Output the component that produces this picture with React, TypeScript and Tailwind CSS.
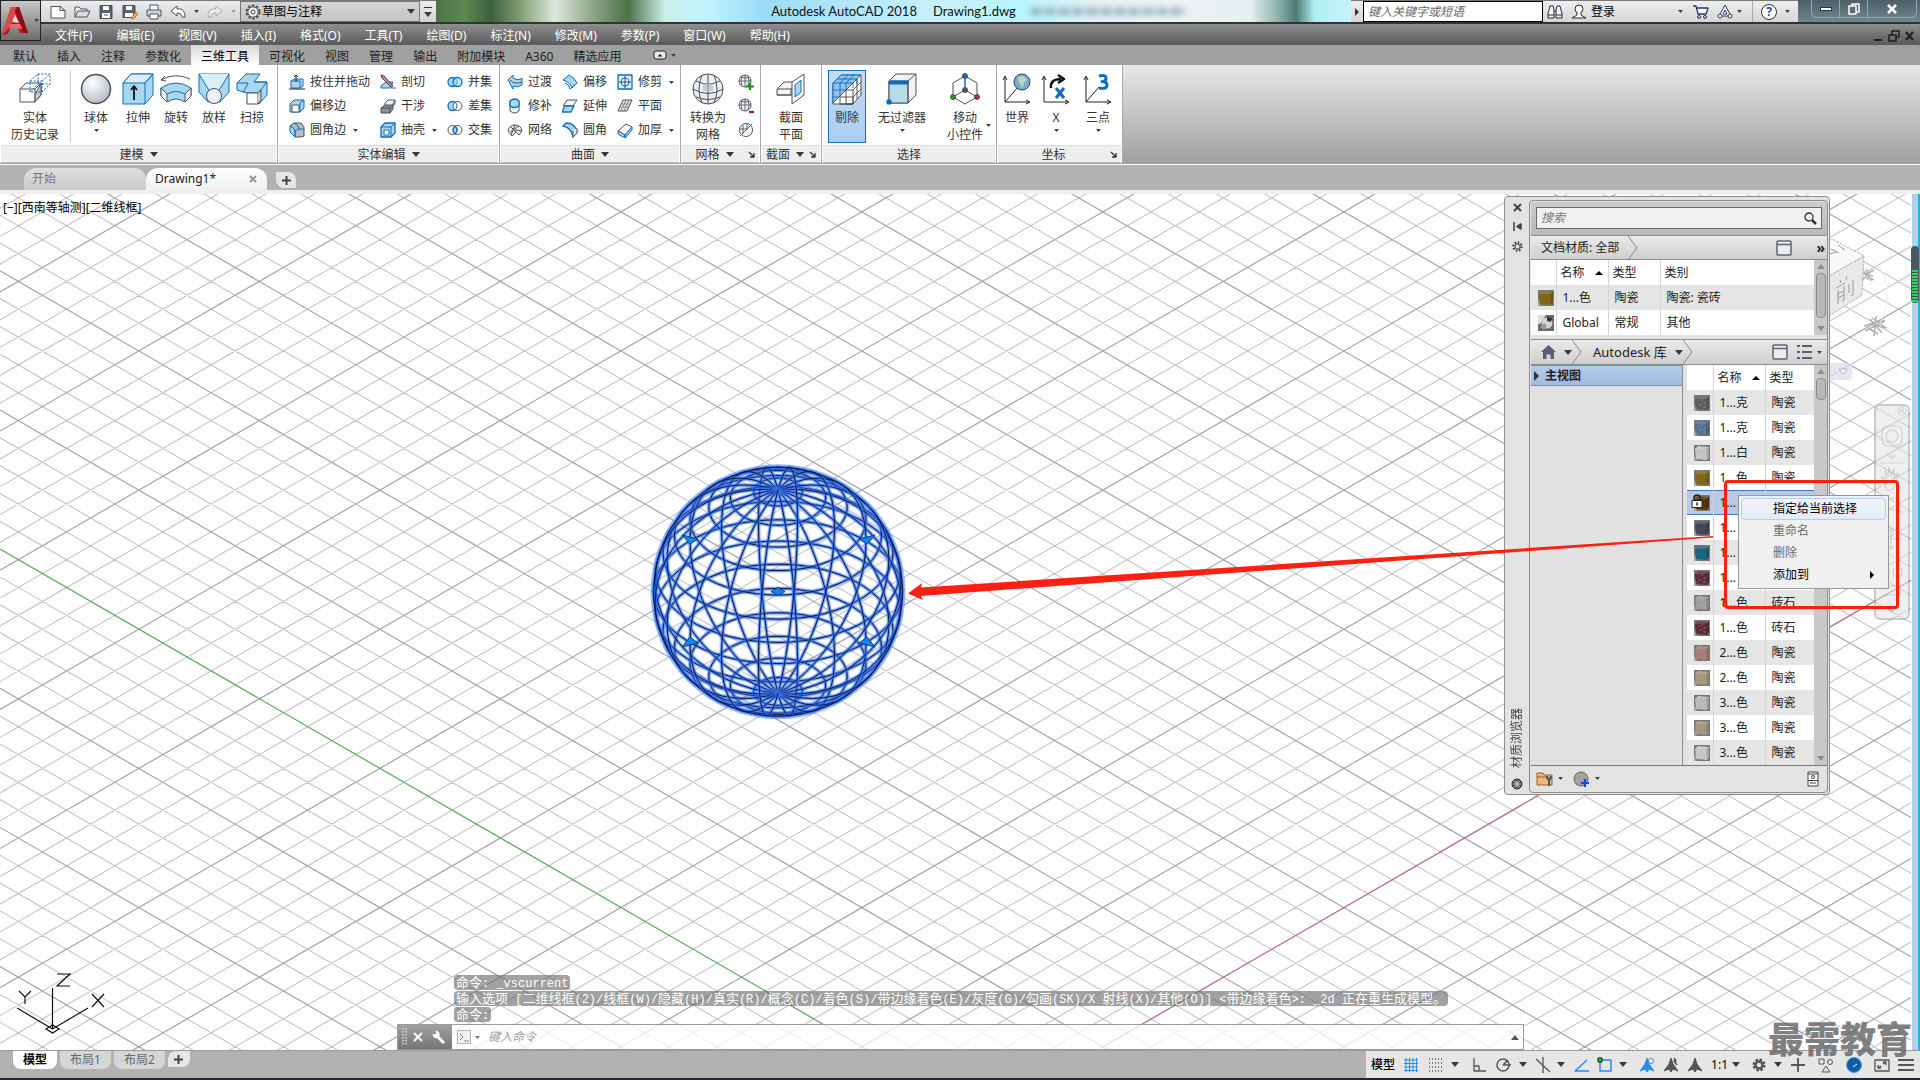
import type { ReactNode } from "react";
import clsx from "clsx";

const VIEW_ORIGIN = { x: 982.4, y: 922.3 };
const SLOPE = 0.57735;
const CELL = 27.83;

type IconProps = { size?: number; w?: number; h?: number; children: ReactNode };
const Icon = ({ size = 16, w = size, h = size, children }: IconProps) => (
  <svg
    width={w}
    height={h}
    viewBox={`0 0 ${w} ${h}`}
    fill="none"
    stroke="#4a525c"
    strokeLinejoin="round"
    className="shrink-0"
    aria-hidden="true"
  >
    {children}
  </svg>
);

const Caret = ({ small = false }: { small?: boolean }) => (
  <svg width={small ? 5 : 8} height={small ? 3 : 5} viewBox="0 0 8 5" className="shrink-0" aria-hidden="true">
    <path d="M0 0h8L4 5z" fill="#3a3a3a" />
  </svg>
);

/* ---------- title bar ---------- */

const AppLogo = () => (
  <svg width="32" height="30" viewBox="0 0 32 30" className="shrink-0" aria-hidden="true">
    <path d="M9 1h8l9 26h-8l-2-6-7-2-3 9-6 1z" fill="#b3191e" />
    <path d="M9 1l5 0-1 6-5 14-8 8z" fill="#e0474b" />
    <path d="M13 8l4 9-7-1z" fill="#d9d9d9" />
    <path d="M8 18l10 0 3 5-14-2z" fill="#ee6a6c" />
    <path d="M17 1l9 26h-4L13 4z" fill="#8e0f14" />
  </svg>
);

const QuickAccess = () => (
  <div className="flex h-full items-center gap-2 pl-[9px] pr-1">
    <button aria-label="新建">
      <Icon>
        <path d="M1 2.5h9l5 4v7.500H1z" fill="#fff" />
        <path d="M10 2.500v4h5" />
      </Icon>
    </button>
    <button aria-label="打开">
      <Icon>
        <path d="M1 13V3h4l2 2h6v2" fill="#eee" />
        <path d="M1 13l3-6h12l-3 6z" fill="#d5dbe2" />
      </Icon>
    </button>
    <button aria-label="保存">
      <Icon>
        <path d="M2 1.500h12v13H2z" fill="#56606c" />
        <path d="M5 2h6v4H5zM4 9h8v5H4z" fill="#fff" stroke="none" />
        <path d="M6 11h4" />
      </Icon>
    </button>
    <button aria-label="另存为">
      <Icon>
        <path d="M1 1.500h12v12H1z" fill="#56606c" />
        <path d="M4 2h6v4H4zM3 9h8v4H3z" fill="#fff" stroke="none" />
        <path d="M9 14l5-6 2 2-5 5z" fill="#f2c14e" stroke="#9a5a20" strokeWidth=".8" />
      </Icon>
    </button>
    <button aria-label="打印">
      <Icon>
        <path d="M4 6V1h8v5" fill="#fff" />
        <path d="M1 6h14v6H1z" fill="#cfd4da" />
        <path d="M4 10h8v5H4z" fill="#fff" />
      </Icon>
    </button>
    <button aria-label="放弃" className="flex items-center gap-2">
      <Icon>
        <path d="M1 7l6-5v3c6-1 8 3 8 8h-3c0-3-2-4-5-4v3z" fill="#fff" />
      </Icon>
      <Caret small />
    </button>
    <button aria-label="重做" className="flex items-center gap-2 opacity-40">
      <Icon>
        <path d="M15 7L9 2v3C3 4 1 8 1 13h3c0-3 2-4 5-4v3z" fill="#fff" />
      </Icon>
      <Caret small />
    </button>
  </div>
);

const GearIcon = () => (
  <Icon>
    <circle cx="8" cy="8" r="6.500" strokeWidth="2" strokeDasharray="2.600 1.500" />
    <circle cx="8" cy="8" r="5.200" fill="#eee" />
    <circle cx="8" cy="8" r="2" />
  </Icon>
);

const TitleBar = () => (
  <div className="flex h-6 items-stretch border-b-2 border-[#333] bg-[#dfeef3]">
    <div className="flex shrink-0 border-t border-[#777] bg-linear-to-b from-[#eeeeee] to-[#d2d2d2]">
      <QuickAccess />
      <div className="flex w-[180px] items-center border border-[#777] bg-linear-to-b from-[#d4d4d4] to-[#c4c4c4] px-1">
        <GearIcon />
        <select
          aria-label="工作空间"
          className="ml-px min-w-0 flex-1 appearance-none bg-transparent text-xs leading-4 text-black outline-none"
        >
          <option>草图与注释</option>
        </select>
        <Caret />
      </div>
      <button aria-label="自定义快速访问工具栏" className="flex w-4 flex-col items-center justify-center gap-1">
        <span className="h-px w-2 bg-[#333]" />
        <Caret />
      </button>
    </div>
    <div className="relative flex flex-1 items-center justify-center gap-4 overflow-hidden bg-[linear-gradient(90deg,#4f7048_0%,#5c8a50_3%,#3e5f3c_6%,#7c9a70_9%,#dfe8dd_13%,#8fa98a_17%,#4c7048_21%,#c8efe9_25%,#c3f4fd_29%,#9adcf5_36%,#b4e6f8_45%,#c6f1fa_55%,#b8f4fc_64%,#e4f1f3_72%,#eef3f3_80%,#e6eff0_89%,#8fb3ad_92%,#4e7a74_94%,#b0eef2_96%,#c4f4fc_100%)] font-['Lato','Noto_Sans_CJK_SC',sans-serif] text-[13px] leading-5 text-[#111]">
      <span>Autodesk AutoCAD 2018</span>
      <span>Drawing1.dwg</span>
      <span className="absolute left-[65%] h-[7px] w-[155px] bg-[repeating-linear-gradient(90deg,#5b7f94_0px,#5b7f94_9px,#c3dbe3_11px,#c3dbe3_14px)] opacity-60 blur-[3px]" />
    </div>
    <div className="flex shrink-0 items-center border-t border-[#777] bg-linear-to-b from-[#eeeeee] to-[#d6d6d6]">
      <button aria-label="展开" className="flex w-3 justify-center">
        <svg width="4" height="8" viewBox="0 0 4 8"><path d="M0 0l4 4-4 4z" fill="#333" /></svg>
      </button>
      <input
        aria-label="键入关键字或短语"
        placeholder="键入关键字或短语"
        className="h-[21px] w-[180px] border border-black bg-white px-1 text-xs italic outline-none placeholder:text-[#666]"
      />
      <button aria-label="搜索" className="ml-1">
        <Icon>
          <path d="M2 6l1-4h3l1 4v8H1V9zM14 6l-1-4h-3L9 6v8h6V9z" fill="#f4f4f4" stroke="#222c3c" />
          <path d="M7 7h2M1 11h6M9 11h6" stroke="#222c3c" />
        </Icon>
      </button>
      <button className="ml-2 flex w-[112px] items-center gap-1 text-xs leading-4 text-black">
        <Icon>
          <circle cx="8" cy="5" r="4" fill="#fff" stroke="#222c3c" />
          <path d="M6 8v3l-5 3h14l-5-3V8" fill="#fff" stroke="#222c3c" />
        </Icon>
        <span className="flex-1 text-left">登录</span>
        <Caret small />
      </button>
      <button aria-label="Autodesk App Store" className="ml-[10px]">
        <Icon>
          <path d="M0 2h3l2 8h8l2-6H4" fill="#fff" stroke="#28376b" strokeWidth="1.300" />
          <circle cx="6" cy="13" r="1.500" stroke="#28376b" />
          <circle cx="12" cy="13" r="1.500" stroke="#28376b" />
        </Icon>
      </button>
      <button aria-label="保持连接" className="ml-2 flex items-center gap-1">
        <Icon>
          <path d="M8 1l6 11H2z" fill="#fff" stroke="#28376b" />
          <path d="M8 6l2 4H6z" stroke="#28376b" />
          <circle cx="3" cy="12" r="2" fill="#fff" stroke="#28376b" />
          <circle cx="13" cy="12" r="2" fill="#fff" stroke="#28376b" />
        </Icon>
        <Caret small />
      </button>
      <button aria-label="帮助" className="ml-[10px] mr-2 flex h-full items-center gap-2 border-l border-[#aaa] pl-2">
        <span className="flex size-4 items-center justify-center rounded-full border border-[#333] bg-white text-xs font-bold leading-none text-[#1c4fa8]">
          ?
        </span>
        <Caret small />
      </button>
    </div>
    <div className="flex w-[122px] shrink-0 items-start justify-end bg-linear-to-b from-[#4d6068] to-[#6f8790] pr-[3px]">
      <div className="flex h-[18px] overflow-hidden rounded-b-md border border-t-0 border-[#94a5ab] text-white">
        <button aria-label="最小化" className="flex w-7 items-center justify-center border-r border-[#94a5ab]">
          <span className="h-1 w-3 border border-[#333] bg-white" />
        </button>
        <button aria-label="还原" className="flex w-7 items-center justify-center border-r border-[#94a5ab]">
          <Icon w={12} h={12}>
            <path d="M4 1h7v8H4z" stroke="#fff" strokeWidth="1.500" />
            <path d="M1 3h7v8H1z" fill="#5a6c74" stroke="#fff" strokeWidth="1.500" />
          </Icon>
        </button>
        <button aria-label="关闭" className="flex w-12 items-center justify-center">
          <Icon w={12} h={10}>
            <path d="M2 1l8 8M10 1L2 9" stroke="#fff" strokeWidth="2.500" />
          </Icon>
        </button>
      </div>
    </div>
  </div>
);

const menus = [
  "文件(F)", "编辑(E)", "视图(V)", "插入(I)", "格式(O)", "工具(T)",
  "绘图(D)", "标注(N)", "修改(M)", "参数(P)", "窗口(W)", "帮助(H)",
];

const MenuBar = () => (
  <div className="flex h-[21px] items-center bg-linear-to-b from-[#8f8f8f] to-[#5a5a5a] pl-[14px] pt-[2px] text-xs leading-4 text-white">
    {menus.map((m) => (
      <button key={m} className="mr-6 whitespace-nowrap">
        {m}
      </button>
    ))}
    <div className="ml-auto flex items-center gap-1 pr-1">
      <button aria-label="最小化图形"><Icon w={12} h={12}><path d="M2 10h8" stroke="#1e1e1e" strokeWidth="2" /></Icon></button>
      <button aria-label="还原图形">
        <Icon w={12} h={12}>
          <path d="M4 5V1h7v6H8" stroke="#1e1e1e" strokeWidth="1.500" />
          <path d="M1 5h7v6H1z" stroke="#1e1e1e" strokeWidth="1.500" />
        </Icon>
      </button>
      <button aria-label="关闭图形"><Icon w={12} h={12}><path d="M2 2l7 8M9 2l-7 8" stroke="#1e1e1e" strokeWidth="2" /></Icon></button>
    </div>
  </div>
);

/* ---------- ribbon ---------- */

const tabs = ["默认", "插入", "注释", "参数化", "三维工具", "可视化", "视图", "管理", "输出", "附加模块", "A360", "精选应用"];

const RibbonTabs = () => (
  <div className="flex h-5 items-stretch bg-[#a0a0a0] pl-[3px] text-xs leading-4 text-[#222]">
    {tabs.map((t) => (
      <button
        key={t}
        className={clsx(
          "whitespace-nowrap px-[10px] pt-[3px]",
          t === "三维工具" && "bg-linear-to-b from-[#d8d8d8] to-white text-black"
        )}
      >
        {t}
      </button>
    ))}
    <button aria-label="最小化功能区" className="ml-[22px] flex items-center gap-1">
      <Icon w={14} h={10}>
        <rect x="1" y="1" width="12" height="8" rx="2" fill="#e8e8e8" stroke="#222" />
        <path d="M4.500 6.500L7 4l2.500 2.500z" fill="#222" stroke="none" />
      </Icon>
      <Caret small />
    </button>
  </div>
);

const BLUE = "#0f6cbd";
const SKY = "#a9d8ee";
const PALE = "#dceef6";

const bigIcons: Record<string, ReactNode> = {
  history: (
    <>
      <path d="M1 16l6-6h15v12l-6 7H1z" fill="#fff" />
      <path d="M1 16h15v13M16 16l6-6" />
      <path d="M16 22V29l6-7V10z" fill="#c6c9cd" />
      <path d="M11 8l8-7h12v10l-8 8H11zM11 8h12v11M23 8l8-7M19 1v10h12M11 19l8-8" stroke={BLUE} strokeDasharray="2 1.500" />
    </>
  ),
  sphere: (
    <>
      <defs>
        <radialGradient id="ball" cx=".38" cy=".3" r=".75">
          <stop offset="0" stopColor="#fff" />
          <stop offset="1" stopColor="#b4b8be" />
        </radialGradient>
      </defs>
      <circle cx="16" cy="16" r="14.500" fill="url(#ball)" strokeWidth="1.500" />
    </>
  ),
  extrude: (
    <>
      <path d="M1 10l8-9h22v21l-8 9H1z" fill={SKY} stroke={BLUE} />
      <path d="M1 10l8-9h22l-8 9z" fill={PALE} stroke={BLUE} />
      <path d="M23 10v21M23 10l8-9" stroke={BLUE} />
      <path d="M12 27V14M9 17l3-4 3 4" stroke="#111" strokeWidth="1.800" />
    </>
  ),
  revolve: (
    <>
      <path d="M1 7q14-8 29-1M1 7l4-4M1 7l5 1" />
      <path d="M1 15Q16 5 31 15v8l-6 6q-9-6-18 0l-6-6z" fill={SKY} stroke={BLUE} />
      <path d="M1 15l6 6q9-5 18 0l6-6" stroke={BLUE} />
      <path d="M1 15l6 6v8l-6-6zM31 15l-6 6v8l6-6z" fill="#f4f4f4" />
    </>
  ),
  loft: (
    <>
      <path d="M1 1h30v18l-9 10H10L1 19z" fill={SKY} stroke={BLUE} />
      <path d="M1 1l11 18h8L31 1" fill={PALE} stroke={BLUE} />
      <circle cx="16" cy="23" r="7.500" fill="#f0f0f0" />
    </>
  ),
  sweep: (
    <>
      <path d="M10 1h14l-6 8h13v13l-8 9V20H11L1 17v-7z" fill={SKY} stroke={BLUE} />
      <path d="M1 10h11l-5 10M18 9h13l-8 10" stroke={BLUE} />
      <path d="M11 20h11v11H11z" fill="#fff" />
      <path d="M22 20l3-3v10l-3 4" fill="#ccc" />
    </>
  ),
  mesh: (
    <>
      <circle cx="16" cy="16" r="15" fill="#eceef0" />
      <path d="M1 16q15 9 30 0M4 8q12 6 24 0M4 24q12 5 24 0M16 1v30M10 2Q4 16 10 30M22 2q6 14 0 28" />
      <path d="M11 18h10v-8H11z" fill="#aeb6c0" fillOpacity=".6" stroke="none" />
    </>
  ),
  section: (
    <>
      <path d="M2 16l7-7h11v13H2z" fill="#f3f3f3" />
      <path d="M2 16h14v6H2M16 16l6-7" />
      <path d="M17 9L29 1v21L17 31z" fill="#fff" />
      <path d="M20 12l6-5v12l-6 5z" fill={SKY} stroke={BLUE} />
    </>
  ),
  cull: (
    <>
      <path d="M2 10l8-8h20v20l-8 9H2z" fill="#fff" />
      <path d="M2 10l8-8h20l-8 8L2 30z" fill="#8fc4ea" stroke={BLUE} />
      <path d="M2 10h20v5M22 10l8-8M9 10v13M15 10v7M2 17h14M2 24h6M9 10l8-8M15 10l8-8M6 6h20v5" stroke={BLUE} strokeWidth=".9" />
      <path d="M9 24h13v7H9zM15 17h7v14h-7zM22 17l8-8M22 24l8-8M26 6v20" stroke="#444" strokeWidth=".9" />
    </>
  ),
  filter: (
    <>
      <path d="M3 8l7-7h20v21l-8 8H3z" fill="#f2f2f2" />
      <path d="M3 8h19v22H3z" fill="#b7dbe9" />
      <path d="M22 8l8-7M22 30V8" />
      <path d="M3 8h19v3H3z" fill={BLUE} stroke={BLUE} />
      <path d="M1 27h4v4H1z" fill={BLUE} stroke={BLUE} />
    </>
  ),
  gizmo: (
    <>
      <path d="M16 3l12 7v14l-12 7-12-7V10z" />
      <path d="M16 17V3" stroke={BLUE} strokeWidth="1.500" />
      <path d="M16 17l12 7M16 17L4 24" />
      <circle cx="16" cy="3" r="2.500" fill={BLUE} />
      <circle cx="16" cy="17" r="2.500" fill="#555" />
      <circle cx="4" cy="24" r="2.500" fill="#2a9a2a" />
      <circle cx="28" cy="24" r="2.500" fill="#c62828" />
    </>
  ),
  world: (
    <>
      <path d="M4 4v25h24M4 29l13-15M2 7l2-4 2 4M25 27l4 2-4 2" stroke="#222" />
      <circle cx="21" cy="9" r="8" fill="#7ba9cf" stroke="#2c4a66" />
      <path d="M17 4l5-1 4 4-3 2-1 6-4-5z" fill="#b9dcb0" stroke="none" />
    </>
  ),
  axisX: (
    <>
      <path d="M4 4v25h24M2 7l2-4 2 4M25 27l4 2-4 2" stroke="#222" />
      <path d="M11 15q-1-9 10-9M18 2l6 4-6 4" stroke="#111" strokeWidth="2.500" />
      <path d="M16 15l8 10M24 15l-8 10" stroke={BLUE} strokeWidth="3" />
    </>
  ),
  axis3: (
    <>
      <path d="M4 4v25h24M4 29l13-15M2 7l2-4 2 4M25 27l4 2-4 2" stroke="#222" />
      <path d="M17 3q7-2 7 2.500 0 3-4 3 5 0 5 3.500 0 4.500-8 3" stroke={BLUE} strokeWidth="3" />
    </>
  ),
};

const smallIcons: Record<string, ReactNode> = {
  pressPull: (
    <>
      <path d="M2 7l3-2h9v7l-3 2H2z" fill={SKY} stroke={BLUE} />
      <path d="M2 7h9v7" stroke={BLUE} />
      <path d="M7 8V1M5 3l2-2 2 2M0 15h16" stroke="#222" />
    </>
  ),
  slice: (
    <>
      <path d="M1 12l5-4h7l-3 6H1z" fill={SKY} stroke={BLUE} />
      <path d="M1 1l3 1 9 10-2 1L2 4z" fill="#c88" stroke="#5c3b3b" />
      <path d="M11 14h5" stroke={BLUE} />
    </>
  ),
  union: (
    <>
      <circle cx="5.500" cy="8" r="4.500" fill={SKY} stroke={BLUE} strokeWidth="1.300" />
      <circle cx="10.500" cy="8" r="4.500" fill={SKY} fillOpacity=".6" stroke={BLUE} strokeWidth="1.300" />
    </>
  ),
  subtract: (
    <>
      <circle cx="5.500" cy="8" r="4.500" fill={SKY} stroke={BLUE} strokeWidth="1.300" />
      <circle cx="10.500" cy="8" r="4.500" fill="#fff" />
      <path d="M8 4q4 4 0 8" stroke={BLUE} />
    </>
  ),
  intersect: (
    <>
      <circle cx="5.500" cy="8" r="4.500" />
      <circle cx="10.500" cy="8" r="4.500" />
      <path d="M8 4q4 4 0 8-4-4 0-8z" fill={SKY} stroke={BLUE} strokeWidth="1.300" />
    </>
  ),
  offsetEdge: (
    <>
      <path d="M1 6l4-4h10v8l-4 4H1z" fill={SKY} stroke={BLUE} />
      <path d="M3 7h7v7H3z" fill="#fff" />
      <path d="M11 5l4-3M11 5v9" stroke={BLUE} />
    </>
  ),
  interfere: (
    <>
      <path d="M5 5l3-3h7l-3 6H5z" fill="#f6f6f6" />
      <path d="M1 10l4-3h8v4l-3 4H1z" fill="#8b9198" />
      <path d="M1 10h9v5M10 10l5-4V2" />
    </>
  ),
  shell: (
    <>
      <path d="M1 5l4-4h10v10l-4 4H1z" fill={SKY} stroke={BLUE} strokeWidth="1.300" />
      <path d="M1 5h10v10M11 5l4-4" stroke={BLUE} />
      <path d="M4 8h5v5H4z" fill="#fff" stroke={BLUE} />
    </>
  ),
  filletEdge: (
    <>
      <path d="M1 4l4-3h7l3 4v9l-3 1H6z" fill="#b9bec5" />
      <path d="M1 4q4 1 5 5V15L1 10z" fill={SKY} stroke={BLUE} />
      <path d="M5 1q5 2 5 6M6 15V9l4-2h5" stroke={BLUE} />
    </>
  ),
  blend: (
    <>
      <path d="M1 6l5-5v3q4 3 8 1l1-1v7q-4 3-9 1v3z" fill={SKY} stroke={BLUE} />
      <path d="M3 6q5 5 12 2" />
    </>
  ),
  patch: (
    <>
      <path d="M3 4v9q5 4 9 0V4z" fill="#f0f0f0" />
      <path d="M3 3q5-4 9 0v5q-5 3-9 0z" fill={SKY} stroke={BLUE} strokeWidth="1.300" />
    </>
  ),
  network: (
    <>
      <path d="M1 9q1-6 7-6t7 6l-3 4-3-3-4 4z" fill="#eee" />
      <path d="M4 5l8 8M8 3l-4 10M12 4L3 10M15 9l-7-1" />
    </>
  ),
  surfOffset: (
    <>
      <path d="M1 6l6-5q6 3 8 8l-5 5Q8 8 1 6z" fill={SKY} stroke={BLUE} />
      <path d="M3 9q4 1 5 6l5-4" stroke={BLUE} />
    </>
  ),
  extend: (
    <>
      <path d="M5 2h10l-4 6H1z" fill="#f2f2f2" />
      <path d="M3 8h9l-3 6H0z" fill={SKY} stroke={BLUE} strokeWidth="1.300" />
    </>
  ),
  fillet: (
    <>
      <path d="M1 4l3-3q9 0 11 9l-4 5Q10 6 1 4z" fill={SKY} stroke={BLUE} strokeWidth="1.300" />
      <path d="M11 9v6l4-4V6" fill="#eee" />
    </>
  ),
  trim: (
    <>
      <path d="M1 1h14v14H1z" fill={PALE} stroke={BLUE} strokeWidth="1.300" />
      <circle cx="8" cy="8" r="4" fill="#fff" stroke={BLUE} />
      <path d="M8 2v12M2 8h12" stroke="#23486b" />
    </>
  ),
  planar: (
    <>
      <path d="M6 2h9l-5 11H1z" fill="#e6e6e6" />
      <path d="M9 2L4 13M12 2L7 13M4 6h9M3 9h9" stroke="#888" />
    </>
  ),
  thicken: (
    <>
      <path d="M1 9l8-7 6 3-7 8z" fill="#f8f8f8" />
      <path d="M1 9l7 4v3L1 12zM8 13l7-8v3l-7 8z" fill={SKY} stroke={BLUE} />
    </>
  ),
  meshMore: (
    <>
      <circle cx="7" cy="7" r="6" fill="#eee" />
      <path d="M1 7h12M7 1v12M3 3q4 2 8 0M4 2q-2 5 0 10M10 2q2 5 0 10" strokeWidth=".8" />
      <path d="M12 9v7M8 12.500h8" stroke="#149414" strokeWidth="2.200" />
    </>
  ),
  meshLess: (
    <>
      <circle cx="7" cy="7" r="6" fill="#eee" />
      <path d="M1 7h12M7 1v12M3 3q4 2 8 0M4 2q-2 5 0 10M10 2q2 5 0 10" strokeWidth=".8" />
      <path d="M11 14h5" stroke="#b01515" strokeWidth="2.200" />
    </>
  ),
  meshCrease: (
    <>
      <circle cx="8" cy="8" r="6.500" fill="#fff" />
      <path d="M2 14L14 2M5 3v9M9 2v6M2 7h7" strokeWidth=".9" />
    </>
  ),
};

type BigButtonProps = { icon: string; lines: string[]; caret?: boolean; width: string; active?: boolean };
const BigButton = ({ icon, lines, caret, width, active }: BigButtonProps) => (
  <button
    className={clsx(
      "flex h-[73px] shrink-0 flex-col items-center border pt-[2px] text-xs leading-4 text-[#333]",
      width,
      active ? "border-[#1d6ec0] bg-linear-to-b from-[#c3dcf5] to-[#a9cdf0]" : "border-transparent"
    )}
  >
    <Icon size={32}>{bigIcons[icon]}</Icon>
    {lines.map((l) => (
      <span key={l} className="mt-px whitespace-nowrap first-of-type:mt-[5px]">
        {l}
      </span>
    ))}
    {caret && (
      <span className="mt-[3px]">
        <Caret small />
      </span>
    )}
  </button>
);

type SmallButtonProps = { icon: string; label?: string; caret?: boolean };
const SmallButton = ({ icon, label, caret }: SmallButtonProps) => (
  <button className="flex h-6 items-center gap-[5px] whitespace-nowrap text-xs leading-4 text-[#333]" aria-label={label ?? icon}>
    <Icon>{smallIcons[icon]}</Icon>
    {label}
    {caret && (
      <span className="pl-[2px]">
        <Caret small />
      </span>
    )}
  </button>
);

type PanelProps = { title: string; caret?: boolean; launcher?: boolean; width: string; children: ReactNode };
const Panel = ({ title, caret, launcher, width, children }: PanelProps) => (
  <section className={clsx("flex shrink-0 flex-col border-r border-[#a8a8a8] bg-white", width)}>
    <div className="flex flex-1 items-start pt-[5px]">{children}</div>
    <div className="mx-px flex h-[18px] items-center border-t border-b border-t-[#dcdcdc] border-b-[#bbb] bg-[#eeeeee] pt-px text-xs leading-4 text-[#333]">
      <span className="flex flex-1 items-center justify-center gap-[6px]">
        {title}
        {caret && <Caret />}
      </span>
      {launcher && (
        <Icon w={12} h={8}>
          <path d="M2 1l5 5M7 2v4H3" stroke="#333" strokeWidth="1.300" />
        </Icon>
      )}
    </div>
  </section>
);

const SmallColumn = ({ items, width }: { items: SmallButtonProps[]; width: string }) => (
  <div className={clsx("flex shrink-0 flex-col", width)}>
    {items.map((i) => (
      <SmallButton key={i.icon} {...i} />
    ))}
  </div>
);

const Ribbon = () => (
  <div className="flex h-[100px] border-b border-white bg-linear-to-b from-[#e8e8e8] to-[#a0a0a0] pb-px">
    <Panel title="建模" caret width="w-[278px]">
      <BigButton icon="history" lines={["实体", "历史记录"]} width="w-[70px]" />
      <div className="mr-[2px] h-[72px] w-px shrink-0 bg-[#ccc]" />
      <BigButton icon="sphere" lines={["球体"]} caret width="w-[46px]" />
      <BigButton icon="extrude" lines={["拉伸"]} width="w-[38px]" />
      <BigButton icon="revolve" lines={["旋转"]} width="w-[38px]" />
      <BigButton icon="loft" lines={["放样"]} width="w-[38px]" />
      <BigButton icon="sweep" lines={["扫掠"]} width="w-[38px]" />
    </Panel>
    <Panel title="实体编辑" caret width="w-[222px]">
      <div className="flex pl-[11px]">
        <SmallColumn
          width="w-[91px]"
          items={[
            { icon: "pressPull", label: "按住并拖动" },
            { icon: "offsetEdge", label: "偏移边" },
            { icon: "filletEdge", label: "圆角边", caret: true },
          ]}
        />
        <SmallColumn
          width="w-[67px]"
          items={[
            { icon: "slice", label: "剖切" },
            { icon: "interfere", label: "干涉" },
            { icon: "shell", label: "抽壳", caret: true },
          ]}
        />
        <SmallColumn
          width="w-[46px]"
          items={[
            { icon: "union", label: "并集" },
            { icon: "subtract", label: "差集" },
            { icon: "intersect", label: "交集" },
          ]}
        />
      </div>
    </Panel>
    <Panel title="曲面" caret width="w-[181px]">
      <div className="flex pl-[7px]">
        <SmallColumn
          width="w-[55px]"
          items={[
            { icon: "blend", label: "过渡" },
            { icon: "patch", label: "修补" },
            { icon: "network", label: "网络" },
          ]}
        />
        <SmallColumn
          width="w-[55px]"
          items={[
            { icon: "surfOffset", label: "偏移" },
            { icon: "extend", label: "延伸" },
            { icon: "fillet", label: "圆角" },
          ]}
        />
        <SmallColumn
          width="w-[60px]"
          items={[
            { icon: "trim", label: "修剪", caret: true },
            { icon: "planar", label: "平面" },
            { icon: "thicken", label: "加厚", caret: true },
          ]}
        />
      </div>
    </Panel>
    <Panel title="网格" caret launcher width="w-[80px]">
      <BigButton icon="mesh" lines={["转换为", "网格"]} width="w-[54px]" />
      <div className="pl-[3px]">
        <SmallColumn width="w-5" items={[{ icon: "meshMore" }, { icon: "meshLess" }, { icon: "meshCrease" }]} />
      </div>
    </Panel>
    <Panel title="截面" caret launcher width="w-[61px]">
      <BigButton icon="section" lines={["截面", "平面"]} width="w-[60px]" />
    </Panel>
    <Panel title="选择" width="w-[175px]">
      <div className="flex pl-[6px]">
        <BigButton icon="cull" lines={["剔除"]} width="w-[38px]" active />
        <BigButton icon="filter" lines={["无过滤器"]} caret width="w-[72px]" />
        <BigButton icon="gizmo" lines={["移动", "小控件"]} width="w-[54px]" />
        <span className="-ml-[6px] pt-[54px]">
          <Caret small />
        </span>
      </div>
    </Panel>
    <Panel title="坐标" launcher width="w-[126px]">
      <BigButton icon="world" lines={["世界"]} width="w-[40px]" />
      <BigButton icon="axisX" lines={["X"]} caret width="w-[38px]" />
      <BigButton icon="axis3" lines={["三点"]} caret width="w-[46px]" />
    </Panel>
  </div>
);

const DocumentTabs = () => (
  <div className="flex h-[29px] items-end border-b-4 border-[#efefef] bg-[#b2b2b2] pl-6 text-xs leading-4">
    <button className="relative h-[22px] w-[122px] rounded-t-xl bg-linear-to-b from-[#dedede] to-[#cbcbcb] pl-2 text-left text-[#777] before:absolute before:inset-y-0 before:-left-[6px] before:w-5 before:-skew-x-[20deg] before:rounded-tl-xl before:bg-inherit">
      <span className="relative">开始</span>
    </button>
    <div className="relative flex h-[22px] w-[121px] items-center justify-between rounded-t-xl bg-linear-to-b from-white to-[#f0f0f0] px-[9px] text-[#222] before:absolute before:inset-y-0 before:-left-[4px] before:w-5 before:-skew-x-[20deg] before:rounded-tl-xl before:bg-inherit after:absolute after:inset-y-0 after:-right-[5px] after:w-5 after:skew-x-[20deg] after:rounded-tr-xl after:bg-inherit">
      <span className="relative z-10">Drawing1*</span>
      <button aria-label="关闭 Drawing1" className="relative z-10 mr-px">
        <Icon w={8} h={8}>
          <path d="M1 1l6 6M7 1L1 7" stroke="#999" strokeWidth="2" />
        </Icon>
      </button>
    </div>
    <button
      aria-label="新图形"
      className="mb-[2px] ml-[9px] flex h-4 w-5 items-center justify-center rounded-tr-lg rounded-bl-lg bg-[#e6e6e6]"
    >
      <Icon w={9} h={9}>
        <path d="M4.500 0v9M0 4.500h9" stroke="#444" strokeWidth="2" />
      </Icon>
    </button>
  </div>
);

/* ---------- model space ---------- */

const gridPath = (major: boolean) => {
  let d = "";
  for (let k = -60; k <= 24; k++) {
    if ((k % 5 === 0) !== major || k === 0) continue;
    const c = VIEW_ORIGIN.y + k * CELL;
    const drop = SLOPE * VIEW_ORIGIN.x;
    const run = SLOPE * (1911 - VIEW_ORIGIN.x);
    d += `M0 ${(c - drop).toFixed(1)}L1911 ${(c + run).toFixed(1)}`;
    d += `M0 ${(c + drop).toFixed(1)}L1911 ${(c - run).toFixed(1)}`;
  }
  return d;
};

const sphereCurves = () => {
  const R = 124.5;
  const cosE = 0.8165;
  const sinE = 0.57735;
  const rad = Math.PI / 180;
  const point = (lat: number, az: number) => {
    const x = R * Math.cos(lat) * Math.sin(az);
    const y = -R * (Math.sin(lat) * cosE - Math.cos(lat) * Math.cos(az) * sinE);
    return `${(778 + x).toFixed(1)} ${(397.7 + y).toFixed(1)}`;
  };
  const curves: string[] = [];
  for (let i = 1; i < 16; i++) {
    const lat = (-90 + i * 11.25) * rad;
    let d = "";
    for (let a = 0; a <= 360; a += 6) d += (a ? "L" : "M") + point(lat, a * rad);
    curves.push(d);
  }
  for (let m = 0; m < 20; m++) {
    const az = (9 + m * 18) * rad;
    let d = "";
    for (let l = -90; l <= 90; l += 6) d += (l > -90 ? "L" : "M") + point(l * rad, az);
    curves.push(d);
  }
  return curves;
};

// every curve carries its own selection glow, so glows pile up near the poles
const Sphere = () => (
  <g fill="none">
    <circle cx="778" cy="397.7" r="124.500" stroke="#4b82f5" strokeOpacity=".5" strokeWidth="6" />
    {sphereCurves().map((d, i) => (
      <g key={i}>
        <path d={d} stroke="#4b86ff" strokeOpacity=".25" strokeWidth="5" />
        <path d={d} stroke="#2a68ee" strokeOpacity=".6" strokeWidth="3" />
        <path d={d} stroke="#0b1840" strokeWidth="1" />
      </g>
    ))}
    <circle cx="778" cy="397.7" r="124.500" stroke="#0b1840" />
    <g fill="#0a84ff" stroke="#1d3f66">
      <path d="M771 397.500l7-4 7 4-7 4z" />
      <path d="M682 341l16 4-8 5zM875 341l-16 4 8 5zM682 453l16-4-8-6zM875 453l-16-4 8-6z" />
    </g>
  </g>
);

const ModelSpace = () => (
  <svg className="absolute inset-0 size-full" aria-hidden="true">
    <path d={gridPath(false)} stroke="#c4c4ca" strokeWidth="1.100" />
    <path d={gridPath(true)} stroke="#a3a3b4" strokeWidth="1.200" />
    <path d="M0 355L866 855" stroke="#5aa85a" strokeWidth="1.200" />
    <path d="M1100 854.500L1911 386.200" stroke="#b06468" strokeWidth="1.200" />
    <Sphere />
    {/* UCS icon */}
    <g stroke="#111" fill="none" strokeWidth="1.200">
      <path d="M52.500 835V794M52.500 835L17 814M52.500 835L88 814M46 835l6.500-4 6.500 4-6.500 4z" />
      <path d="M57 780h13l-13 12h13M92 800l12 13M104 800l-12 13M19 797l6 6 6-6M25 803v7" />
    </g>
    {/* view cube */}
    <g stroke="#b4b4b4" fill="#f2f2f2" strokeDasharray="3 1">
      <path d="M1800 60l32-15 32 17-35 20z" fill="#fafafa" />
      <path d="M1829 82l35-20-2 39-33 21z" fill="#e9e9e9" />
      <path d="M1829 82v40l-34-20V62z" />
    </g>
    <path d="M1836 94l9-5M1838 96v14M1844 92v14l-2 1M1838 100l6-3M1838 104l6-3M1849 90v9M1853 86v15l-2 1M1840 86l1 3M1847 82l-1 4M1831 55l8 4M1838 51l7 5M1830 60l6-2" stroke="#999" fill="none" />
    <path d="M1863 80l10 2M1866 75l5 12M1862 86l9-8M1866 80l8-4M1864 77l4 9M1868 83l6 3" stroke="#b5b5b5" strokeWidth="1.500" />
    <path d="M1864 132l20-6M1870 125l12 14M1865 137l20-10M1876 122l-2 20M1869 130l18 4M1868 134l10 6M1872 124l14 10" stroke="#b0b0b0" strokeWidth="1.500" />
    <path d="M1868 60Q1900 90 1880 130" stroke="#eee" fill="none" />
    <rect x="1800" y="169" width="52" height="17" rx="4" fill="#dcdcec" fillOpacity=".7" />
    <path d="M1839 175h8l-4 5z" fill="#fff" stroke="#b0b0c4" />
    {/* navigation bar */}
    <g opacity=".55">
      <rect x="1875" y="211" width="34" height="214" rx="5" fill="#e2e2e2" stroke="#a0a0a0" strokeWidth="2" />
      <g stroke="#b0b0b0" fill="none" strokeWidth="1.200">
        <circle cx="1902" cy="217" r="4" />
        <path d="M1900 215l4 4M1904 215l-4 4" />
        <rect x="1882" y="232" width="20" height="20" rx="6" />
        <circle cx="1892" cy="242" r="6" />
        <path d="M1889 262h6l-3 3zM1880 269h25" />
        <path d="M1885 290l-3-7 4 2-1-9 3 6 1-9 2 9 3-8v10l4-5-2 12-4 5h-5z" />
        <circle cx="1893" cy="310" r="6" />
        <path d="M1897 314l6 6M1880 345h22M1891 335v20M1888 338l3-3 3 3M1888 352l3 3 3-3" />
        <path d="M1880 375h9v7h-9zM1893 375h9v7h-9zM1882 392h18v9h-18M1889 415h6l-3 3z" />
      </g>
    </g>
  </svg>
);

/* ---------- material browser ---------- */

const Swatch = ({ color, speckle }: { color: string; speckle?: boolean }) => (
  <svg width="16" height="16" viewBox="0 0 16 16" aria-hidden="true">
    <rect width="16" height="16" fill="#777" />
    <path d="M0 16V9l3 7z" fill="#a5a5a5" />
    <path d="M1 4l3-3 11 1v10l-2 3-11-1z" fill={color} />
    <path d="M1 4l3-3 11 1-3 2z" fill="#fff" fillOpacity=".14" />
    <path d="M12 4l3-2v10l-2 3z" fill="#000" fillOpacity=".15" />
    {speckle && <path d="M4 6h1M7 5h2M10 8h2M5 10h2M9 12h3M3 13h1M13 6h1M8 9h1" stroke="#fff" strokeOpacity=".3" />}
  </svg>
);

const GlobalSwatch = () => (
  <svg width="16" height="16" viewBox="0 0 16 16" aria-hidden="true">
    <rect width="16" height="16" fill="#6a6a6a" />
    <path d="M0 0h8L2 9H0z" fill="#ddd" />
    <circle cx="9" cy="8" r="5.500" fill="#d4d4d4" />
    <path d="M9 2l5 1-1 4-4-1z" fill="#333" />
    <path d="M2 12l4-4 3 3-3 4z" fill="#999" />
  </svg>
);

const libraryRows = [
  { color: "#5d5d5d", name: "1...克", type: "陶瓷", speckle: true },
  { color: "#54708f", name: "1...克", type: "陶瓷", speckle: true },
  { color: "#c4c4c4", name: "1...白", type: "陶瓷" },
  { color: "#80651a", name: "1...色", type: "陶瓷" },
  { color: "#56350f", name: "1...", type: "", selected: true },
  { color: "#44475c", name: "1...", type: "" },
  { color: "#1d6480", name: "1...", type: "" },
  { color: "#5c2c35", name: "1...", type: "", speckle: true },
  { color: "#9b9b98", name: "1...色", type: "砖石", speckle: true },
  { color: "#5c2c35", name: "1...色", type: "砖石", speckle: true },
  { color: "#a57f76", name: "2...色", type: "陶瓷" },
  { color: "#a39a80", name: "2...色", type: "陶瓷" },
  { color: "#b8b8b8", name: "3...色", type: "陶瓷" },
  { color: "#a5967f", name: "3...色", type: "陶瓷" },
  { color: "#c6c6c6", name: "3...色", type: "陶瓷" },
];

const SortMark = () => <span className="ml-[10px] inline-block border-x-4 border-b-4 border-x-transparent border-b-black align-middle" />;

const ScrollBar = ({ thumb }: { thumb: string }) => (
  <div className="flex w-[13px] shrink-0 flex-col items-center bg-[#c8c8c8] py-1">
    <span className="border-x-4 border-b-5 border-x-transparent border-b-[#8c8c8c]" />
    <span className={clsx("my-1 w-[10px] rounded-sm border border-[#8c8c8c] bg-[#b8b8b8]", thumb)} />
    <span className="mt-auto border-x-4 border-t-5 border-x-transparent border-t-[#8c8c8c]" />
  </div>
);

const Chevron = () => (
  <svg width="11" height="24" viewBox="0 0 11 24" className="shrink-0" aria-hidden="true">
    <path d="M0 0l9 12-9 12" fill="none" stroke="#8a8a8a" />
  </svg>
);

const PaneIcon = () => (
  <Icon>
    <rect x="1" y="1" width="14" height="14" rx="1" fill="#eee" stroke="#5c6675" strokeWidth="1.500" />
    <path d="M1 4.500h14" stroke="#5c6675" strokeWidth="1.500" />
  </Icon>
);

const cell = "border-l border-[#d5d5d5] pl-[6px] text-left font-normal";

const ContextMenu = () => (
  <div
    role="menu"
    className="absolute left-[233px] top-[298px] w-[151px] border border-[#979797] bg-[#f0f0f0] p-[2px] text-xs leading-[22px] text-black"
  >
    <button role="menuitem" className="block h-[22px] w-full rounded-sm border border-[#aecff7] bg-linear-to-b from-[#f0f4fa] to-[#e3ecf8] pl-[31px] text-left leading-5">
      指定给当前选择
    </button>
    <button role="menuitem" disabled className="block h-[22px] w-full pl-8 text-left text-[#6d6d6d]">
      重命名
    </button>
    <button role="menuitem" disabled className="block h-[22px] w-full pl-8 text-left text-[#6d6d6d]">
      删除
    </button>
    <button role="menuitem" className="flex h-[22px] w-full items-center justify-between pl-8 pr-3 text-left">
      添加到
      <span className="border-y-4 border-l-4 border-y-transparent border-l-black" />
    </button>
  </div>
);

const MaterialBrowser = () => (
  <aside className="absolute right-[82px] top-[2px] flex w-[326px] rounded border border-[#8e8e8e] bg-[#e3e3e3] text-xs leading-4 text-[#222]">
    <div className="flex w-6 shrink-0 flex-col items-center pb-1 pt-1">
      <button aria-label="关闭" className="mt-[2px]">
        <Icon w={9} h={9}><path d="M1 1l7 7M8 1L1 8" stroke="#444" strokeWidth="2" /></Icon>
      </button>
      <button aria-label="自动隐藏" className="mt-[10px]">
        <Icon w={9} h={9}><path d="M1 0v9M8 2v5L4 4.500z" fill="#444" stroke="#444" strokeWidth="1.500" /></Icon>
      </button>
      <button aria-label="特性" className="mt-[10px]">
        <Icon w={11} h={11}>
          <circle cx="5.500" cy="5.500" r="4" stroke="#444" strokeWidth="2.500" strokeDasharray="1.600 1.500" />
          <circle cx="5.500" cy="5.500" r="2.500" stroke="#444" />
        </Icon>
      </button>
      <span className="mb-[10px] mt-auto rotate-180 text-[#444] [text-orientation:sideways] [writing-mode:vertical-rl]">材质浏览器</span>
      <Icon w={12} h={12}>
        <circle cx="6" cy="6" r="5" fill="#555" stroke="#333" />
        <path d="M3 3l6 6M9 3L3 9M6 2v8M2 6h8" stroke="#ddd" strokeWidth=".8" />
      </Icon>
    </div>
    <div className="mb-px mr-px mt-[3px] min-w-0 flex-1 rounded border border-[#8e8e8e] bg-[#e3e3e3] py-px pl-px">
      <div className="h-[33px] bg-linear-to-b from-[#cccccc] to-[#b9b9b9] px-[5px] pt-[5px]">
        <div className="flex h-[22px] items-center border border-[#6a6a6a] bg-[#f1f1f1] px-1">
          <input
            aria-label="搜索"
            placeholder="搜索"
            className="min-w-0 flex-1 bg-transparent italic outline-none placeholder:text-[#777]"
          />
          <Icon w={13} h={13}>
            <circle cx="5" cy="5" r="4" stroke="#333" strokeWidth="1.300" />
            <path d="M8 8l4 4" stroke="#333" strokeWidth="2.500" />
          </Icon>
        </div>
      </div>
      <div className="flex h-[25px] items-center border-b border-t border-[#8c8c8c] bg-linear-to-b from-[#eaeaea] to-[#cfcfcf] pl-[10px]">
        文档材质: 全部
        <span className="ml-[9px] flex-1"><Chevron /></span>
        <button aria-label="显示窗格"><PaneIcon /></button>
        <button aria-label="更多" className="ml-6 mr-[2px] text-sm font-bold leading-4">»</button>
      </div>
      <div className="flex">
        <table className="w-full table-fixed border-collapse bg-white">
          <colgroup>
            <col className="w-[25px]" />
            <col className="w-[52px]" />
            <col className="w-[52px]" />
            <col />
          </colgroup>
          <thead>
            <tr className="h-[25px]">
              <th />
              <th className="border-l border-[#d5d5d5] pl-1 text-left font-normal">名称<SortMark /></th>
              <th className="border-l border-[#d5d5d5] pl-1 text-left font-normal">类型</th>
              <th className="border-l border-[#d5d5d5] pl-1 text-left font-normal">类别</th>
            </tr>
          </thead>
          <tbody>
            <tr className="h-[25px] bg-[#e5e5e5]">
              <td className="pl-[7px]"><Swatch color="#80651a" /></td>
              <td className={cell}>1...色</td>
              <td className={cell}>陶瓷</td>
              <td className={cell}>陶瓷: 瓷砖</td>
            </tr>
            <tr className="h-[25px]">
              <td className="pl-[7px]"><GlobalSwatch /></td>
              <td className={cell}>Global</td>
              <td className={cell}>常规</td>
              <td className={cell}>其他</td>
            </tr>
          </tbody>
        </table>
        <ScrollBar thumb="h-[45px]" />
      </div>
      <div className="mt-[4px] flex h-[26px] items-center border-b border-t border-[#8c8c8c] bg-linear-to-b from-[#eaeaea] to-[#cfcfcf] pl-[10px]">
        <button aria-label="主页" className="flex items-center gap-2">
          <Icon w={15} h={14}>
            <path d="M0 7l7.500-7L15 7h-2v7H9.500V9.500h-4V14H2V7z" fill="#566072" stroke="none" />
          </Icon>
          <Caret />
        </button>
        <Chevron />
        <button className="ml-[10px] flex items-center gap-2 text-[13px]">
          Autodesk 库
          <Caret />
        </button>
        <span className="flex-1"><Chevron /></span>
        <button aria-label="显示库树"><PaneIcon /></button>
        <button aria-label="视图" className="ml-2 mr-[5px] flex items-center gap-[5px]">
          <Icon>
            <path d="M1 2h3M1 8h3M1 14h3M6 2h10M6 8h10M6 14h10" stroke="#566072" strokeWidth="2.200" />
          </Icon>
          <Caret small />
        </button>
      </div>
      <div className="flex">
        <div className="flex-1 border-r border-[#8c8c8c] bg-[#e1e1e1]">
          <button className="flex h-[21px] w-full items-center gap-[6px] border-b border-t border-[#6d93c4] bg-linear-to-b from-[#b4cbea] to-[#a2bade] pl-[3px] font-bold">
            <span className="border-y-5 border-l-5 border-y-transparent border-l-[#333]" />
            主视图
          </button>
        </div>
        <div className="w-1 bg-[#e1e1e1]" />
        <table className="w-[127px] table-fixed border-collapse bg-white">
          <colgroup>
            <col className="w-[26px]" />
            <col className="w-[52px]" />
            <col />
          </colgroup>
          <thead>
            <tr className="h-[25px]">
              <th />
              <th className="border-l border-[#d5d5d5] pl-1 text-left font-normal">名称<SortMark /></th>
              <th className="border-l border-[#d5d5d5] pl-1 text-left font-normal">类型</th>
            </tr>
          </thead>
          <tbody>
            {libraryRows.map((r, i) => (
              <tr
                key={i}
                className={clsx(
                  "h-[25px]",
                  r.selected ? "bg-[#b9cbe4] shadow-[inset_0_1px_0_#4a77b4,inset_0_-1px_0_#4a77b4]" : i % 2 === 0 && "bg-[#e5e5e5]"
                )}
              >
                <td className="relative pl-[7px]">
                  <Swatch color={r.color} speckle={r.speckle} />
                  {r.selected && (
                    <svg width="12" height="14" viewBox="0 0 12 14" className="absolute left-1 top-1" aria-hidden="true">
                      <path d="M3 7V4q0-3 3-3t3 3v3" fill="none" stroke="#222" strokeWidth="1.500" />
                      <path d="M1 6.500h10v7H1z" fill="#fff" stroke="#222" />
                      <path d="M6 8.500v3" stroke="#222" strokeWidth="1.500" />
                    </svg>
                  )}
                </td>
                <td className={cell}>{r.name}</td>
                <td className={cell}>{r.type}</td>
              </tr>
            ))}
          </tbody>
        </table>
        <ScrollBar thumb="h-[22px]" />
      </div>
      <div className="flex h-[26px] items-center gap-1 border-t border-[#777] pl-[5px] pr-2">
        <button aria-label="管理库" className="flex items-center gap-1">
          <Icon w={18} h={16}>
            <path d="M1 2h6l1 2h8v10H1z" fill="#f0b878" stroke="#9c6022" />
            <path d="M1 6h14" stroke="#9c6022" />
            <path d="M13 8v7M11 5v2l2 2 2-2V5" stroke="#35536e" strokeWidth="1.800" />
          </Icon>
          <Caret small />
        </button>
        <button aria-label="创建材质" className="ml-[6px] flex flex-1 items-center gap-1">
          <Icon w={18} h={16}>
            <circle cx="8" cy="8" r="7" fill="#a2a2a2" stroke="#666" />
            <path d="M12 8v8M8 12h8" stroke="#1c43e8" strokeWidth="2.200" />
          </Icon>
          <Caret small />
        </button>
        <button aria-label="材质编辑器">
          <Icon w={12} h={16}>
            <rect x="1" y="1" width="10" height="14" fill="#fff" stroke="#444" />
            <path d="M1 3h10M1 9.500h10M3 12h6" stroke="#444" />
            <circle cx="6" cy="6" r="1.500" stroke="#444" />
          </Icon>
        </button>
      </div>
    </div>
    <ContextMenu />
    <div className="absolute left-[219px] top-[283px] h-[129px] w-[175px] rounded-sm border-3 border-[#fd2012]" />
  </aside>
);

const Callout = () => (
  <svg className="pointer-events-none absolute inset-0 size-full" aria-hidden="true">
    <path d="M908 399.500L922 389l-1 4.500L1713 342v1.500L921 402l2 4z" fill="#fd2012" />
  </svg>
);

/* ---------- command line ---------- */

const history = [
  "命令: _vscurrent",
  "输入选项 [二维线框(2)/线框(W)/隐藏(H)/真实(R)/概念(C)/着色(S)/带边缘着色(E)/灰度(G)/勾画(SK)/X 射线(X)/其他(O)] <带边缘着色>: _2d 正在重生成模型。",
  "命令:",
];

const HistoryLine = ({ text }: { text: string }) => (
  <span className="h-[15px] whitespace-pre rounded-sm bg-[#6e6e6e]/65 px-[2px] text-[13px] leading-[15px] text-white">
    {text.split(/([\x20-\x7e]+)/).map((part, i) => (
      <span key={i} className={i % 2 ? "font-['Liberation_Mono',monospace] text-xs leading-[15px]" : undefined}>
        {part}
      </span>
    ))}
  </span>
);

const CommandLine = () => (
  <div className="absolute bottom-0 left-[397px] right-[388px]">
    <div className="flex flex-col items-start gap-px pb-[2px] pl-[57px]">
      {history.map((h) => (
        <HistoryLine key={h} text={h} />
      ))}
    </div>
    <div className="flex h-[26px] border border-[#9a9a9a] bg-white/75">
      <div className="flex w-[54px] items-center gap-[6px] bg-linear-to-b from-[#a2a2a2] to-[#757575] pl-1">
        <Icon w={5} h={18}>
          <path d="M1 0v18M4 0v18" stroke="#ddd" strokeDasharray="1.500 1.500" strokeWidth="1.500" />
        </Icon>
        <button aria-label="关闭命令行">
          <Icon w={10} h={10}><path d="M1 1l8 8M9 1L1 9" stroke="#fff" strokeWidth="2" /></Icon>
        </button>
        <button aria-label="自定义" className="ml-[3px]">
          <Icon w={14} h={14}>
            <path d="M5 6l7 7" stroke="#fff" strokeWidth="3" />
            <path d="M4 1l1 3-3 1-1-1q0 4 4 4 3-1 2-5-1-2-3-2" fill="#fff" stroke="#fff" />
          </Icon>
        </button>
      </div>
      <button aria-label="最近使用的命令" className="ml-[5px] flex items-center gap-1 opacity-70">
        <Icon w={14} h={14}>
          <rect x=".5" y=".5" width="13" height="13" fill="#e9edf2" stroke="#8a94a2" />
          <path d="M3 4l3 3-3 3M7 11h5" />
        </Icon>
        <Caret small />
      </button>
      <input
        aria-label="键入命令"
        placeholder="键入命令"
        className="ml-2 min-w-0 flex-1 bg-transparent text-xs italic outline-none placeholder:text-[#a0a0a0]"
      />
      <button aria-label="历史记录" className="px-1">
        <span className="block border-x-4 border-b-5 border-x-transparent border-b-[#555]" />
      </button>
    </div>
  </div>
);

/* ---------- status bar ---------- */

const LayoutTab = ({ label, active }: { label: string; active?: boolean }) => (
  <button
    className={clsx(
      "h-[18px] rounded-b-lg px-[10px]",
      active ? "bg-white font-bold text-black" : "bg-[#d6d6d6] text-[#666]"
    )}
  >
    {label}
  </button>
);

const person = "M8 1l2 6 5 7-5-2-2 3-2-3-5 2 5-7z";

const StatusBar = () => (
  <footer className="flex h-[28px] shrink-0 items-stretch border-t border-[#9a9a9a] bg-[#b2b2b2] text-xs leading-4">
    <div className="flex items-start gap-[3px] pl-[13px]">
      <LayoutTab label="模型" active />
      <LayoutTab label="布局1" />
      <LayoutTab label="布局2" />
      <button aria-label="新建布局" className="flex h-4 w-[22px] items-center justify-center rounded-br-lg rounded-tl-lg bg-[#e6e6e6]">
        <Icon w={9} h={9}><path d="M4.500 0v9M0 4.500h9" stroke="#444" strokeWidth="2" /></Icon>
      </button>
    </div>
    <div className="ml-auto flex items-center gap-2 bg-[#e6e6e6] pl-[5px] pr-[6px] text-black">
      <button className="font-medium">模型</button>
      <button aria-label="栅格">
        <Icon><path d="M3 1v14M6.500 1v14M10 1v14M13.500 1v14M1 3h14M1 6.500h14M1 10h14M1 13.500h14" stroke="#2a8cf0" /></Icon>
      </button>
      <button aria-label="捕捉" className="flex items-center gap-2">
        <Icon><path d="M2 2h13M2 6h13M2 10h13M2 14h13" stroke="#555" strokeDasharray="1 2" strokeWidth="1.300" /></Icon>
        <Caret />
      </button>
      <button aria-label="正交" className="ml-1"><Icon><path d="M3 1v13h12M3 9h5v5" stroke="#555" strokeWidth="1.300" /></Icon></button>
      <button aria-label="极轴" className="flex items-center gap-2">
        <Icon><circle cx="8" cy="8" r="6" stroke="#555" strokeWidth="1.500" /><path d="M8 8h8M8 8l5-5" stroke="#555" strokeWidth="1.500" /></Icon>
        <Caret />
      </button>
      <button aria-label="等轴测草图" className="flex items-center gap-[6px]">
        <Icon><path d="M8 0v16M1 2l14 13" stroke="#555" strokeWidth="1.300" /></Icon>
        <Caret />
      </button>
      <button aria-label="对象捕捉追踪"><Icon><path d="M14 3L2 14h14" stroke="#2a8cf0" strokeWidth="1.500" /></Icon></button>
      <button aria-label="对象捕捉" className="flex items-center gap-[6px]">
        <Icon><path d="M3 3h11v11H3z" stroke="#2a8cf0" strokeWidth="1.500" /><path d="M1 1h4v4H1z" fill="#18e018" stroke="#111" /></Icon>
        <Caret />
      </button>
      <button aria-label="注释可见性" className="ml-1"><Icon><path d={person} fill="#2a8cf0" stroke="#2a8cf0" /><circle cx="12" cy="4" r="2.500" fill="#fff" stroke="#2a8cf0" /></Icon></button>
      <button aria-label="自动缩放"><Icon><path d={person} fill="#555" stroke="#555" /><path d="M11 1l2 3h-2l3 4" stroke="#555" strokeWidth="1.500" /></Icon></button>
      <button className="flex items-center gap-1 whitespace-nowrap">
        <Icon><path d={person} fill="#555" stroke="#555" /></Icon>
        <span className="pl-1">1:1</span>
        <Caret />
      </button>
      <button aria-label="切换工作空间" className="ml-1 flex items-center gap-2">
        <Icon w={14} h={14}>
          <circle cx="7" cy="7" r="5" stroke="#555" strokeWidth="3" strokeDasharray="2.400 1.500" />
          <circle cx="7" cy="7" r="3.500" stroke="#555" strokeWidth="2.500" />
        </Icon>
        <Caret />
      </button>
      <button aria-label="注释监视器"><Icon><path d="M8 1v14M1 8h14" stroke="#555" strokeWidth="1.800" /></Icon></button>
      <button aria-label="隔离对象" className="ml-1"><Icon><path d="M1 2h5v5H1zM8 9l4 6H4z" stroke="#555" /><circle cx="12" cy="5" r="2.500" stroke="#555" /></Icon></button>
      <button aria-label="硬件加速" className="ml-1"><Icon><circle cx="8" cy="8" r="7.500" fill="#0b5da8" stroke="#4f9be6" /><path d="M7 10l4-3" stroke="#fff" /></Icon></button>
      <button aria-label="全屏显示" className="ml-1"><Icon><path d="M1 3h14v11H1zM4 11l3-2M9 7l3-2M4 8v3h3M9 5h3v3" stroke="#555" strokeWidth="1.300" /></Icon></button>
      <button aria-label="自定义"><Icon><path d="M0 3h16M0 8h16M0 13h16" stroke="#555" strokeWidth="1.800" /></Icon></button>
    </div>
  </footer>
);

export default function App() {
  return (
    <div className="relative flex h-screen flex-col overflow-hidden border-b-2 border-[#1d2a33] bg-white font-['Noto_Sans','Noto_Sans_CJK_SC',sans-serif]">
      <header className="shrink-0">
        <div className="flex bg-[#5f5f5f]">
          <button
            aria-label="应用程序菜单"
            className="flex h-[41px] w-[41px] shrink-0 items-center border border-[#222] bg-linear-to-b from-[#c8c8c8] to-[#6e6e6e] pl-px"
          >
            <AppLogo />
            <Caret small />
          </button>
          <div className="min-w-0 flex-1">
            <TitleBar />
            <MenuBar />
          </div>
        </div>
        <RibbonTabs />
        <Ribbon />
        <DocumentTabs />
      </header>
      <main className="flex min-h-0 flex-1">
        <div className="relative min-w-0 flex-1 overflow-hidden">
          <ModelSpace />
          <span className="relative block pl-[3px] pt-[6px] text-xs leading-4 text-black">[−][西南等轴测][二维线框]</span>
          <MaterialBrowser />
          <Callout />
          <CommandLine />
        </div>
        <div className="flex w-2 shrink-0 flex-col border-r-2 border-[#1fb4d8] bg-[#b7cfeb] pt-[52px]">
          <div className="-ml-px flex h-[57px] w-2 flex-col justify-end rounded bg-[#4d565e] p-px">
            <div className="h-8 bg-[repeating-linear-gradient(#35d060_0px,#35d060_2px,#3b5a48_2px,#3b5a48_3px)]" />
          </div>
        </div>
      </main>
      <StatusBar />
      <div className="pointer-events-none absolute bottom-[18px] right-[8px] text-[36px] font-black leading-10 text-[#6f6f6f]/90">
        最需教育
      </div>
    </div>
  );
}
